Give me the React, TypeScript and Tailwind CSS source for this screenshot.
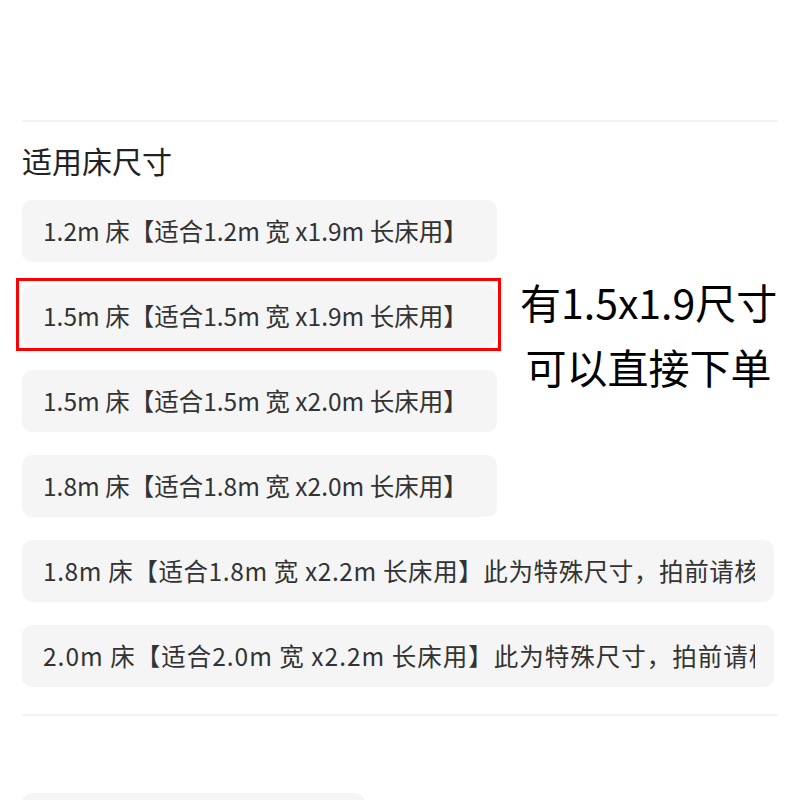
import React from "react";

const sizes = [
  "1.2m 床【适合1.2m 宽 x1.9m 长床用】",
  "1.5m 床【适合1.5m 宽 x1.9m 长床用】",
  "1.5m 床【适合1.5m 宽 x2.0m 长床用】",
  "1.8m 床【适合1.8m 宽 x2.0m 长床用】",
  "1.8m 床【适合1.8m 宽 x2.2m 长床用】此为特殊尺寸，拍前请核对尺寸",
  "2.0m 床【适合2.0m 宽 x2.2m 长床用】此为特殊尺寸，拍前请核对尺寸",
];

export default function App() {
  return (
    <div
      className="relative w-[800px] h-[800px] overflow-hidden bg-white px-[22px]"
      style={{ fontFamily: '"Noto Sans CJK SC", "Noto Sans", sans-serif' }}
    >
      <div className="h-[120px]" />
      <div className="h-[2px] bg-[#f2f2f2]" />

      <h2 className="pt-[24px] text-[30px] leading-[28px] text-[#222]">适用床尺寸</h2>

      <div className="mt-[26px] flex flex-col gap-[23px]">
        {sizes.map((s, i) => (
          <div key={i} className="relative w-fit max-w-[752px]">
            <div
              className={
                "flex h-[62px] items-center whitespace-nowrap rounded-[10px] bg-[#f5f5f5] pl-[21px] text-[24.5px] text-[#333] " +
                (i === 4 ? "pr-[19px] tracking-[0.6px]" : i === 5 ? "pr-[19px] tracking-[1px]" : "pr-[29px]")
              }
            >
              <span className="min-w-0 overflow-hidden">{s}</span>
            </div>
            {i === 1 && (
              <div className="pointer-events-none absolute -left-[6px] -right-[4px] -top-[7px] -bottom-[4px] border-[3px] border-[#ff0000]" />
            )}
          </div>
        ))}
      </div>

      <div className="mt-[27px] h-[2px] bg-[#f2f2f2]" />

      <div className="mt-[77px] h-[20px] w-[343px] rounded-t-[10px] bg-[#f5f5f5]" />

      <div className="absolute left-[520px] top-[277px] flex flex-col items-center text-[41px] leading-[48px] text-black">
        <span className="mb-[17px]">有1.5x1.9尺寸</span>
        <span>可以直接下单</span>
      </div>
    </div>
  );
}
